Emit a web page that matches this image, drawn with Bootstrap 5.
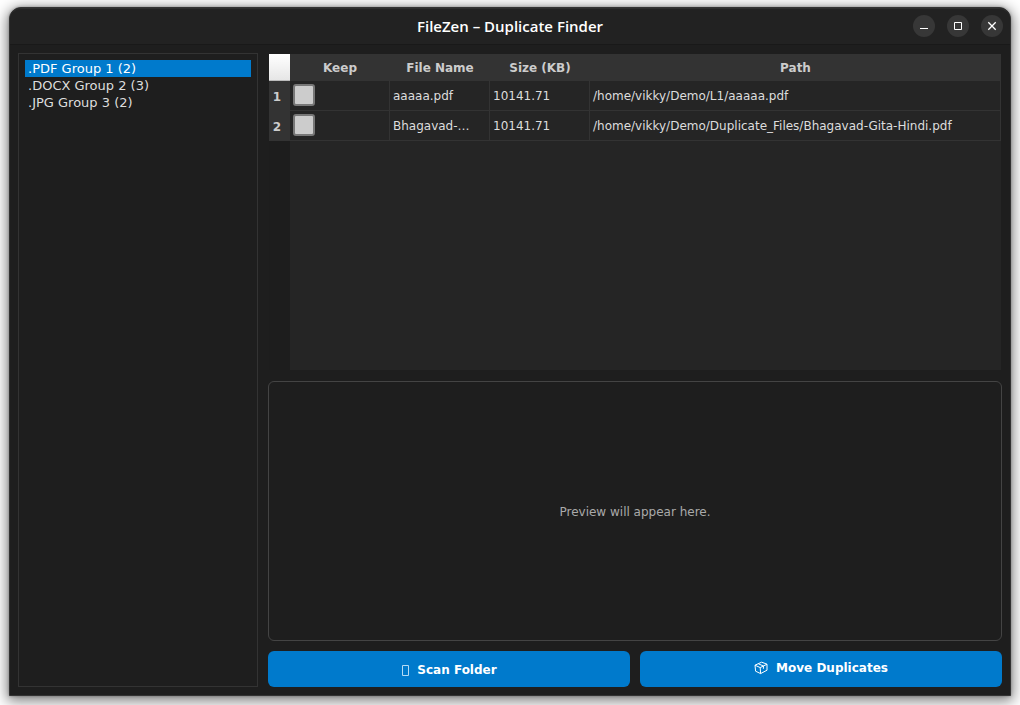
<!DOCTYPE html>
<html lang="en">
<head>
<meta charset="utf-8">
<meta name="viewport" content="width=device-width, initial-scale=1">
<title>FileZen – Duplicate Finder</title>
<link href="https://cdn.jsdelivr.net/npm/bootstrap@5.3.0/dist/css/bootstrap.min.css" rel="stylesheet">
<style>
  body { background: #fff; color: #ddd; font-family: "DejaVu Sans", sans-serif; font-size: 12px; line-height: 16px; padding: 7px 9px 9px; }
  .app-window { background: #1e1e1e; border: 1px solid #333; border-radius: 12px 12px 0 0; box-shadow: 0 3px 14px 2px rgba(0, 0, 0, .5), 0 0 3px rgba(0, 0, 0, .3); }
  .title-bar { height: 37px; background: #222; border-top: 1px solid #2e2e2e; border-bottom: 1px solid #191919; border-radius: 11px 11px 0 0; padding: 0 7px 1px; }
  .title-bar h1 { font: 600 15px/20px "Open Sans", sans-serif; color: #fff; }
  .side-space { flex: 1 1 0; }
  .win-btn { width: 22px; height: 22px; border: 0; border-radius: 50%; background: #373737; color: #fff; padding: 0; }
  .win-btn svg { display: block; }
  .app-body { padding: 8px; gap: 10px; }
  .group-list { width: 240px; border: 1px solid #333; padding: 6px; font-size: 13px; line-height: 17px; }
  .group-list a { color: #ddd; text-decoration: none; padding: 0 3px; display: block; }
  .group-list a.active { background: #007acc; color: #fff; }
  .work-area { gap: 10px; }
  .table-pane { flex: 316 1 0; padding: 1px; }
  .table-fill { height: 100%; background: linear-gradient(to right, #1d1d1d 21px, #252525 21px); }
  .files { width: 100%; table-layout: fixed; border-collapse: separate; border-spacing: 0; }
  .files th { background: #333; color: #ccc; font-weight: bold; text-align: center; padding: 0; }
  .files thead th { height: 27px; }
  .files thead td { background: linear-gradient(#fff, #e6e6e6); border-bottom: 1px solid #bbb; }
  .files tbody th { padding: 2px 9px 0 0; text-align: right; }
  .files tbody td { height: 30px; padding: 0 3px; border: solid #333; border-width: 0 1px 1px 0; background: #252525; white-space: nowrap; overflow: hidden; }
  .files tbody .keep-cell { padding-bottom: 2px; }
  .c-num { width: 21px; }
  .c-field { width: 100px; }
  .keep-box { appearance: none; display: block; width: 22px; height: 22px; margin: 0; border: 2px solid #777; border-radius: 3px; background: #ccc; }
  .keep-box:checked { background: #007acc; }
  .preview-pane { flex: 256 1 0; border: 1px solid #444; border-radius: 6px; color: #aaa; padding-top: 2px; }
  .action-row { gap: 10px; }
  .action-btn { flex: 1 1 0; height: 36px; border: 0; border-radius: 6px; background: #007acc; color: #fff; font-size: 12px; line-height: 16px; font-weight: bold; padding: 2px 0 0; gap: 8px; }
  .action-btn:hover { background: #0a86da; color: #fff; }
  .action-btn.raised { padding: 0 0 2px; }
</style>
</head>
<body class="d-flex flex-column min-vh-100">
<main class="app-window d-flex flex-column flex-grow-1">
  <header class="title-bar d-flex align-items-center">
    <div class="side-space"></div>
    <h1 class="m-0">FileZen – Duplicate Finder</h1>
    <div class="side-space d-flex justify-content-end">
      <div class="d-flex" style="gap:12px">
        <button class="win-btn" type="button" aria-label="Minimize"><svg width="22" height="22"><path d="M7 13.5h8" stroke="currentColor"/></svg></button>
        <button class="win-btn" type="button" aria-label="Maximize"><svg width="22" height="22"><path d="M7.5 7.5h7v7h-7z" fill="none" stroke="currentColor"/></svg></button>
        <button class="win-btn" type="button" aria-label="Close"><svg width="22" height="22"><path d="M7.3 7.3l7.4 7.4M14.7 7.3l-7.4 7.4" stroke="currentColor" stroke-width="1.3"/></svg></button>
      </div>
    </div>
  </header>
  <div class="app-body d-flex flex-grow-1">
    <nav class="group-list flex-shrink-0" aria-label="Duplicate groups">
      <a class="active" href="#pdf">.PDF Group 1 (2)</a>
      <a href="#docx">.DOCX Group 2 (3)</a>
      <a href="#jpg">.JPG Group 3 (2)</a>
    </nav>
    <section class="work-area d-flex flex-column flex-grow-1">
      <div class="table-pane d-flex flex-column">
        <div class="table-fill flex-grow-1">
          <table class="files">
            <colgroup><col class="c-num"><col class="c-field"><col class="c-field"><col class="c-field"><col></colgroup>
            <thead>
              <tr><td></td><th scope="col">Keep</th><th scope="col">File Name</th><th scope="col">Size (KB)</th><th scope="col">Path</th></tr>
            </thead>
            <tbody>
              <tr><th scope="row">1</th><td class="keep-cell"><input class="keep-box" type="checkbox" aria-label="Keep aaaaa.pdf"></td><td>aaaaa.pdf</td><td>10141.71</td><td>/home/vikky/Demo/L1/aaaaa.pdf</td></tr>
              <tr><th scope="row">2</th><td class="keep-cell"><input class="keep-box" type="checkbox" aria-label="Keep Bhagavad-Gita-Hindi.pdf"></td><td>Bhagavad-…</td><td>10141.71</td><td>/home/vikky/Demo/Duplicate_Files/Bhagavad-Gita-Hindi.pdf</td></tr>
            </tbody>
          </table>
        </div>
      </div>
      <div class="preview-pane d-flex align-items-center justify-content-center">Preview will appear here.</div>
      <div class="action-row d-flex">
        <button class="btn action-btn d-flex align-items-center justify-content-center" type="button"><svg width="8" height="12" viewBox="0 0 8 12"><path d="M1.5 1.5h6v10h-6z" fill="none" stroke="#b5dbf5"/></svg>Scan Folder</button>
        <button class="btn action-btn raised d-flex align-items-center justify-content-center" type="button"><svg width="14" height="14" viewBox="0 0 14 14" fill="none" stroke="#fff" stroke-width="1" stroke-linejoin="round"><path d="M1 4.2L7.6 1.2l5.4 2v6L6.6 12.6 1.6 10.2zM1 4.2L6.2 6.6 13 3.2M6.2 6.6l.4 6M4.4 2.8l5 2.2v2.8"/></svg>Move Duplicates</button>
      </div>
    </section>
  </div>
</main>
<script src="https://cdn.jsdelivr.net/npm/bootstrap@5.3.0/dist/js/bootstrap.bundle.min.js"></script>
</body>
</html>
